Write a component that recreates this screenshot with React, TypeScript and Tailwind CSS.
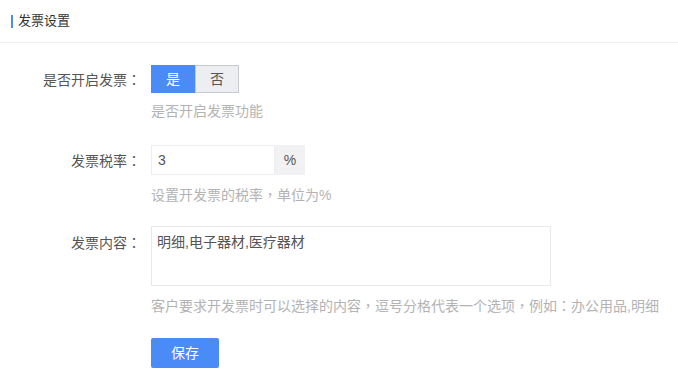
import React from "react";

const tc = { fontFamily: '"Noto Sans CJK TC", sans-serif' };
function P({ c }: { c: string }) {
  return <span style={tc}>{c}</span>;
}

export default function App() {
  const font = { fontFamily: '"Liberation Sans", "Noto Sans CJK SC", sans-serif' };
  return (
    <div className="w-[678px] h-[377px] bg-white overflow-hidden text-[14px]" style={font}>
      {/* header */}
      <div className="h-[43px] border-b border-[#eeeeee] flex items-center pl-[11px]">
        <div className="w-[2px] h-[13px] bg-[#4b8bf7]"></div>
        <div className="ml-[5px] text-[13px] leading-[20px] text-[#333]">发票设置</div>
      </div>

      <div className="pt-[22px]">
        {/* row 1 */}
        <div className="flex">
          <div className="w-[141px] h-[28px] leading-[28px] text-right text-[#555]">
            是否开启发票<P c="：" />
          </div>
          <div className="ml-[10px]">
            <div className="flex h-[28px]">
              <div className="w-[44px] h-[28px] bg-[#4b8bf7] text-white flex items-center justify-center">是</div>
              <div className="w-[44px] h-[28px] bg-[#eceef1] border border-[#c6c9cd] text-[#555] flex items-center justify-center">否</div>
            </div>
            <div className="mt-[8px] h-[20px] leading-[20px] text-[#b3b3b3]">是否开启发票功能</div>
          </div>
        </div>

        {/* row 2 */}
        <div className="flex mt-[24px]">
          <div className="w-[141px] h-[30px] leading-[30px] text-right text-[#555]">
            发票税率<P c="：" />
          </div>
          <div className="ml-[10px]">
            <div className="flex h-[30px]">
              <div className="w-[124px] h-[30px] border border-[#eeeeee] pl-[6px] leading-[28px] text-[#555]">3</div>
              <div className="w-[30px] h-[30px] bg-[#f2f1f4] text-[#555] flex items-center justify-center">%</div>
            </div>
            <div className="mt-[9px] h-[20px] leading-[20px] text-[#b3b3b3]">
              设置开发票的税率<P c="，" />单位为%
            </div>
          </div>
        </div>

        {/* row 3 */}
        <div className="flex mt-[22px]">
          <div className="w-[141px] h-[26px] pt-[6px] leading-[20px] text-right text-[#555]">
            发票内容<P c="：" />
          </div>
          <div className="ml-[10px]">
            <div className="w-[400px] h-[60px] border border-[#e8e8ec] pl-[5px] pt-[5px] leading-[20px] text-[#555]">明细,电子器材,医疗器材</div>
            <div className="mt-[9px] h-[20px] leading-[20px] text-[#b3b3b3]">
              客户要求开发票时可以选择的内容<P c="，" />逗号分格代表一个选项<P c="，" />例如<P c="：" />办公用品,明细
            </div>
          </div>
        </div>

        {/* save */}
        <div className="flex mt-[23px]">
          <div className="w-[141px]"></div>
          <div className="ml-[10px]">
            <div className="w-[68px] h-[30px] rounded-[2px] bg-[#4b8bf7] text-white flex items-center justify-center">保存</div>
          </div>
        </div>
      </div>
    </div>
  );
}
